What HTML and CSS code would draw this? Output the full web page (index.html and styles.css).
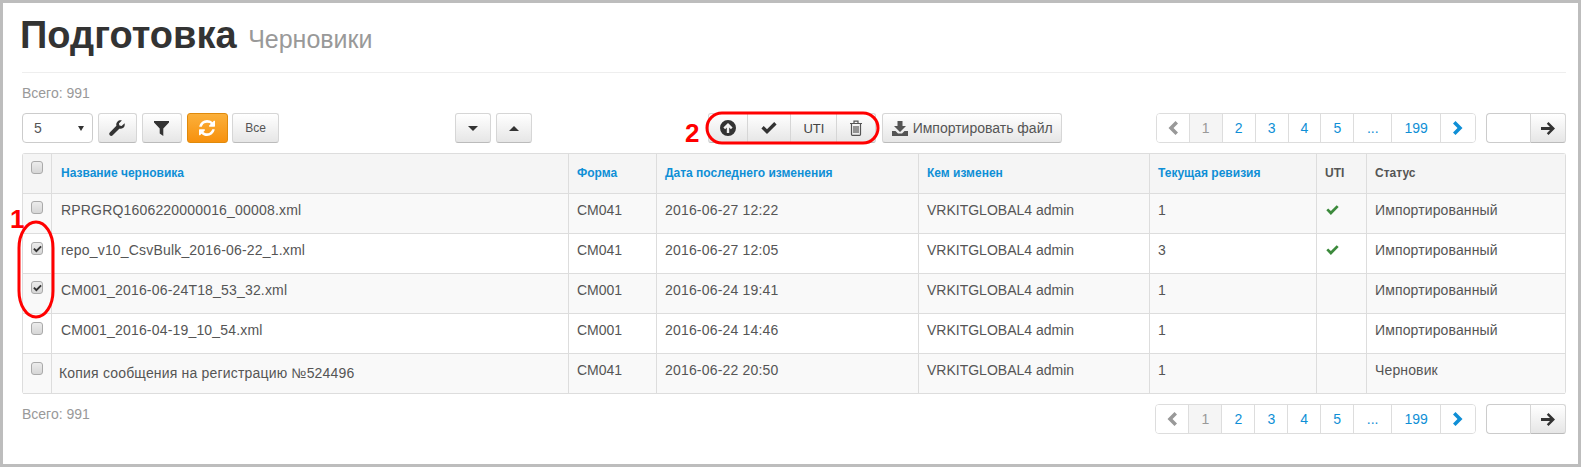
FILE: index.html
```html
<!DOCTYPE html>
<html lang="ru">
<head>
<meta charset="utf-8">
<title>Подготовка</title>
<link rel="stylesheet" href="styles.css">
</head>
<body>
<svg width="0" height="0" class="defs">
  <symbol id="i-ok" viewBox="0 0 16 12"><path d="M0.4 6.4 L2.7 4 L6 7.2 L13.2 0 L15.6 2.4 L6 12 Z"/></symbol>
  <symbol id="i-up" viewBox="0 0 16 16"><path fill-rule="evenodd" d="M8 0a8 8 0 1 0 0 16A8 8 0 0 0 8 0ZM8 3l4.6 4.6-1.7 1.6-1.7-1.6V13H6.800V7.600L5.100 9.200 3.400 7.600Z"/></symbol>
  <symbol id="i-left" viewBox="0 0 10 14"><path d="M7.500 0 10 2.500 5.500 7 10 11.500 7.500 14 0.500 7Z"/></symbol>
  <symbol id="i-right" viewBox="0 0 10 14"><path d="M2.500 0 0 2.500 4.500 7 0 11.500 2.500 14 9.500 7Z"/></symbol>
  <symbol id="i-go" viewBox="0 0 14 13"><path d="M7.500 0 14 6.500 7.500 13 5.800 11.300 9 8H0V5H9L5.800 1.700Z"/></symbol>
</svg>
<main class="page">
  <h1 class="title">Подготовка <small class="title-sub">Черновики</small></h1>
  <div class="total total-top">Всего: 991</div>

  <div class="toolbar">
    <div class="select"><span>5</span><i class="select-arrow"></i></div>
    <button class="btn btn-tool"><svg width="16" height="16" viewBox="0 0 16 16"><path d="M15.600 3.200c.4 1.800-.1 3.500-1.300 4.600-1.100 1-2.600 1.300-4 .9L3.700 15.300c-.8.800-2.100.8-2.900 0s-.8-2.100 0-2.900L7.400 5.800C7 4.400 7.300 2.800 8.400 1.700 9.500.6 11.100.1 12.800.5L9.900 3.400l.5 2.200 2.200.5Z"/></svg></button>
    <button class="btn btn-filter"><svg width="15" height="15" viewBox="0 0 15 15"><path d="M0 0H15V1.500L9.300 7.500V15L5.700 12.500V7.500L0 1.500Z"/></svg></button>
    <button class="btn btn-orange"><svg width="16" height="16" viewBox="0 0 1536 1536"><path d="M1511 928q0 5-1 7-64 268-268 434.500T764 1536q-146 0-282.500-55T238 1324l-129 129q-19 19-45 19t-45-19-19-45V960q0-26 19-45t45-19h448q26 0 45 19t19 45-19 45l-137 137q71 66 161 102t187 36q134 0 250-65t186-179q11-17 53-117 8-23 30-23h192q13 0 22.500 9.500t9.500 22.500zm25-800v448q0 26-19 45t-45 19h-448q-26 0-45-19t-19-45 19-45l138-138Q1117 256 768 256q-134 0-250 65T332 500q-11 17-53 117-8 23-30 23H50q-13 0-22.500-9.500T18 608v-7q65-268 270-434.500T768 0q146 0 284 55.500T1297 212l130-129q19-19 45-19t45 19 19 45z"/></svg></button>
    <button class="btn btn-all">Все</button>

    <div class="sort-group">
      <button class="btn btn-sort"><i class="caret-down"></i></button>
      <button class="btn btn-sort"><i class="caret-up"></i></button>
    </div>

    <div class="btn-group">
      <button class="btn seg seg-1"><svg width="16" height="16"><use href="#i-up"/></svg></button>
      <button class="btn seg seg-2"><svg width="16" height="12"><use href="#i-ok"/></svg></button>
      <button class="btn seg seg-3">UTI</button>
      <button class="btn seg seg-4"><svg width="14" height="16" viewBox="0 0 14 16" class="trash"><path d="M1 3.500H13M5 3.500V1.200H9V3.500M2.500 3.500V14.500C2.500 15 2.800 15.300 3.300 15.300H10.700C11.200 15.300 11.500 15 11.500 14.500V3.500M5 6V13M7 6V13M9 6V13"/></svg></button>
    </div>

    <button class="btn btn-import"><svg width="16" height="15" viewBox="0 0 16 15"><path d="M5.500 0H10.500V5H14L8 11 2 5H5.500ZM0 10H3.500L6 12.500H10L12.500 10H16V15H0Z"/></svg>Импортировать файл</button>

    <nav class="pager pager-top">
      <a class="pg pg-prev"><svg width="10" height="14"><use href="#i-left"/></svg></a><a class="pg pg-n pg-active">1</a><a class="pg pg-n">2</a><a class="pg pg-n">3</a><a class="pg pg-n">4</a><a class="pg pg-n">5</a><a class="pg pg-dots">...</a><a class="pg pg-last">199</a><a class="pg pg-next"><svg width="10" height="14"><use href="#i-right"/></svg></a>
    </nav>
    <div class="jump"><div class="jump-input"></div><button class="btn jump-btn"><svg width="14" height="13"><use href="#i-go"/></svg></button></div>
  </div>

  <table class="grid">
    <thead>
      <tr>
        <th class="c-check"><span class="cb cb-up"></span></th>
        <th class="c-name"><a>Название черновика</a></th>
        <th class="c-form"><a>Форма</a></th>
        <th class="c-date"><a>Дата последнего изменения</a></th>
        <th class="c-user"><a>Кем изменен</a></th>
        <th class="c-rev"><a>Текущая ревизия</a></th>
        <th class="c-uti">UTI</th>
        <th class="c-status">Статус</th>
      </tr>
    </thead>
    <tbody>
      <tr>
        <td><span class="cb cb-up"></span></td><td>RPRGRQ1606220000016_00008.xml</td><td>CM041</td><td>2016-06-27 12:22</td><td>VRKITGLOBAL4 admin</td><td>1</td>
        <td><svg class="ok" width="13" height="10"><use href="#i-ok"/></svg></td><td>Импортированный</td>
      </tr>
      <tr>
        <td><span class="cb"><svg width="9" height="8"><use href="#i-ok"/></svg></span></td><td>repo_v10_CsvBulk_2016-06-22_1.xml</td><td>CM041</td><td>2016-06-27 12:05</td><td>VRKITGLOBAL4 admin</td><td>3</td>
        <td><svg class="ok" width="13" height="10"><use href="#i-ok"/></svg></td><td>Импортированный</td>
      </tr>
      <tr>
        <td><span class="cb cb-up"><svg width="9" height="8"><use href="#i-ok"/></svg></span></td><td>CM001_2016-06-24T18_53_32.xml</td><td>CM001</td><td>2016-06-24 19:41</td><td>VRKITGLOBAL4 admin</td><td>1</td>
        <td></td><td>Импортированный</td>
      </tr>
      <tr>
        <td><span class="cb"></span></td><td>CM001_2016-04-19_10_54.xml</td><td>CM001</td><td>2016-06-24 14:46</td><td>VRKITGLOBAL4 admin</td><td>1</td>
        <td></td><td>Импортированный</td>
      </tr>
      <tr>
        <td><span class="cb"></span></td><td class="name-copy">Копия сообщения на регистрацию №524496</td><td>CM041</td><td>2016-06-22 20:50</td><td>VRKITGLOBAL4 admin</td><td>1</td>
        <td></td><td>Черновик</td>
      </tr>
    </tbody>
  </table>

  <div class="footer-bar">
    <div class="total">Всего: 991</div>
    <nav class="pager">
      <a class="pg pg-prev"><svg width="10" height="14"><use href="#i-left"/></svg></a><a class="pg pg-n pg-active">1</a><a class="pg pg-n">2</a><a class="pg pg-n">3</a><a class="pg pg-n">4</a><a class="pg pg-n">5</a><a class="pg pg-dots">...</a><a class="pg pg-last">199</a><a class="pg pg-next"><svg width="10" height="14"><use href="#i-right"/></svg></a>
    </nav>
    <div class="jump"><div class="jump-input"></div><button class="btn jump-btn"><svg width="14" height="13"><use href="#i-go"/></svg></button></div>
  </div>

  <svg class="notes" width="1581" height="467" viewBox="0 0 1581 467">
    <text x="10" y="228" class="note-num">1</text>
    <rect x="19" y="222" width="34" height="95" rx="17" ry="26" class="note-ring"/>
    <text x="685" y="142" class="note-num">2</text>
    <rect x="707" y="113" width="171" height="30" rx="15" ry="15" class="note-ring"/>
  </svg>
</main>
</body>
</html>
```
FILE: styles.css
```css
* { box-sizing: border-box; }
html, body { margin: 0; padding: 0; }
body {
  width: 1581px;
  height: 467px;
  overflow: hidden;
  background: #fff;
  font-family: "Liberation Sans", Arial, sans-serif;
  color: #555;
}
.defs { position: absolute; }
.page {
  position: relative;
  width: 1581px;
  height: 467px;
  border: 3px solid #bdbdbd;
  padding: 0 12px 0 19px;
}
.page svg { fill: currentColor; }

.title {
  margin: 0;
  height: 70px;
  padding-top: 11px;
  border-bottom: 1px solid #eee;
  font-size: 38px;
  line-height: 42px;
  font-weight: 700;
  color: #333;
  text-indent: -2px;
}
.title-sub {
  margin-left: 1px;
  font-size: 25px;
  font-weight: 400;
  color: #999;
}
.total {
  font-size: 14px;
  line-height: 16px;
  color: #999;
}
.total-top { margin: 12px 0 0; }

.toolbar {
  display: flex;
  align-items: stretch;
  height: 30px;
  margin-top: 12px;
}
.select {
  display: flex;
  align-items: center;
  justify-content: space-between;
  width: 71px;
  padding: 0 8px 0 11px;
  border: 1px solid #ccc;
  border-radius: 4px;
  font-size: 14px;
  color: #555;
  background: #fff;
}
.select-arrow {
  width: 0;
  height: 0;
  border-left: 3px solid transparent;
  border-right: 3px solid transparent;
  border-top: 5px solid #333;
}
.btn {
  display: flex;
  align-items: center;
  justify-content: center;
  padding: 0;
  border: 1px solid #d6d6d6;
  border-bottom-color: #bbb;
  border-radius: 3px;
  background: linear-gradient(#fff, #e6e6e6);
  font-family: inherit;
  color: #333;
}
.btn-tool { width: 39px; margin-left: 5px; }
.btn-filter { width: 40px; margin-left: 5px; }
.btn-orange {
  width: 41px;
  margin-left: 5px;
  border-color: #e08a0c;
  background: linear-gradient(#fbb03b, #f7910e);
  color: #fff;
}
.btn-all { width: 48px; margin-left: 4px; font-size: 12px; color: #555; }

.sort-group { display: flex; gap: 5px; margin-left: 176px; }
.btn-sort { width: 36px; }
.caret-down, .caret-up {
  width: 0;
  height: 0;
  border-left: 5px solid transparent;
  border-right: 5px solid transparent;
}
.caret-down { border-top: 5px solid #333; }
.caret-up { border-bottom: 5px solid #333; }

.btn-group { display: flex; margin-left: 176px; }
.seg { border-radius: 0; border-left-width: 0; }
.seg-1 { width: 40px; border-left-width: 1px; border-radius: 3px 0 0 3px; }
.seg-2 { width: 43px; }
.seg-3 { width: 46px; font-size: 13px; color: #444; }
.seg-4 { width: 39px; border-radius: 0 3px 3px 0; }
.page .trash { fill: none; stroke: #555; stroke-width: 1.200; }

.btn-import {
  width: 180px;
  margin-left: 6px;
  gap: 5px;
  font-size: 14px;
  color: #555;
}

.pager {
  display: flex;
  height: 30px;
  border: 1px solid #ddd;
  border-radius: 4px;
  overflow: hidden;
  font-size: 14px;
}
.pager-top { margin-left: 94px; }
.pg {
  display: flex;
  align-items: center;
  justify-content: center;
  border-right: 1px solid #ddd;
  color: #0f8fd6;
  background: #fff;
}
.pg-prev { width: 33px; color: #999; }
.pg-n { width: 33px; }
.pg-active { background: #f5f5f5; color: #999; }
.pg-dots { width: 38px; }
.pg-last { width: 49px; }
.pg-next { width: 34px; border-right: 0; }
.jump { display: flex; height: 30px; margin-left: 10px; }
.jump-input {
  width: 44px;
  border: 1px solid #ccc;
  border-right: 0;
  border-radius: 4px 0 0 4px;
  background: #fff;
}
.jump-btn { width: 36px; border-radius: 0 3px 3px 0; }

.grid {
  width: 1544px;
  margin-top: 10px;
  table-layout: fixed;
  border-collapse: separate;
  border-spacing: 0;
  border: 1px solid #ddd;
  border-bottom-width: 0;
  border-radius: 3px;
  font-size: 14px;
}
.grid th, .grid td {
  height: 40px;
  padding: 0 8px 7px;
  border-left: 1px solid #ddd;
  border-bottom: 1px solid #ddd;
  text-align: left;
  vertical-align: middle;
  white-space: nowrap;
  font-weight: 400;
}
.grid th { padding-bottom: 2px; background: #f5f5f5; }
.grid th:first-child, .grid td:first-child { border-left: 0; padding: 0 0 0 8px; vertical-align: top; }
.grid th {
  font-size: 12px;
  font-weight: 700;
  color: #555;
}
.grid th a { color: #0f8fd6; }
.grid tbody tr:nth-child(odd) td { background: #f9f9f9; }
.grid td:nth-child(2), .grid td:nth-child(4) { letter-spacing: .18px; }
.grid td:nth-child(8) { letter-spacing: .13px; }
.grid .c-name, .grid td:nth-child(2) { padding-left: 9px; }
.c-check { width: 28px; }
.c-name { width: 517px; }
.c-form { width: 88px; }
.c-date { width: 262px; }
.c-user { width: 231px; }
.c-rev { width: 167px; }
.c-uti { width: 50px; }
.c-status { width: auto; }
.grid td.name-copy { padding-left: 7px; padding-top: 0; padding-bottom: 2px; }
.page .ok { fill: #3c8a3c; display: block; margin-left: 1px; }

.cb {
  display: flex;
  align-items: center;
  justify-content: center;
  width: 12px;
  height: 13px;
  margin-top: 8px;
  border: 1px solid #aaa;
  border-radius: 3px;
  background: linear-gradient(#ececec, #d6d6d6);
  color: #333;
}
.cb-up { margin-top: 7px; }
.cb svg { display: block; }

.footer-bar {
  display: flex;
  align-items: flex-start;
  height: 30px;
  margin-top: 10px;
}
.footer-bar .total { width: 1135px; margin-top: 2px; }

.notes {
  position: absolute;
  left: -3px;
  top: -3px;
  pointer-events: none;
}
.page .note-ring { fill: none; stroke: #f00; stroke-width: 3; }
.page .note-num {
  fill: #f00;
  font-family: "Liberation Sans", Arial, sans-serif;
  font-size: 26px;
  font-weight: 700;
}
```
